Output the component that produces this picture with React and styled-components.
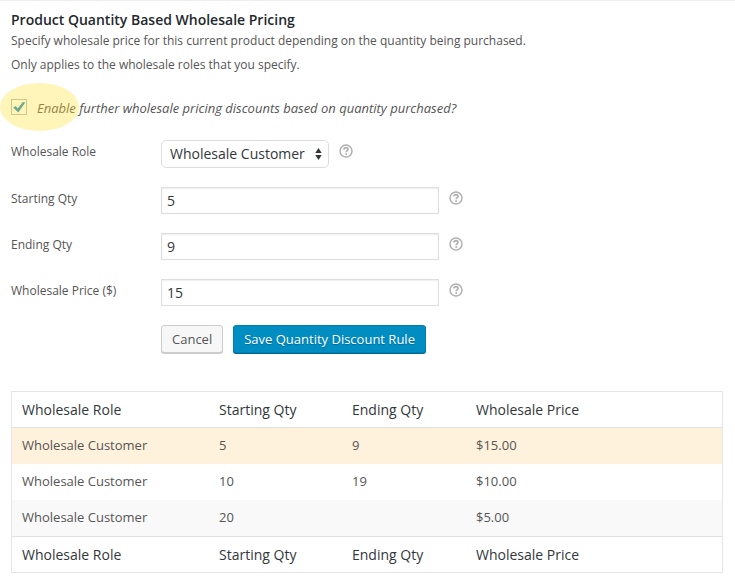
import { useState } from 'react'
import styled, { createGlobalStyle } from 'styled-components'

const GlobalStyle = createGlobalStyle`
    *, *::before, *::after {
        box-sizing: border-box;
    }
    body {
        margin: 0;
        background: #fff;
        color: #555;
        font-family: 'Open Sans', sans-serif;
        font-size: 12px;
    }
    input, select, button {
        font-family: inherit;
    }
`
const Container = styled.main`
    border-top: 1px solid #eee;
    padding: 10px 12px 10px 11px;
`
const Title = styled.h1`
    margin: 0;
    color: #23282d;
    font-size: 14px;
    font-weight: 600;
    line-height: 18px;
`
const Description = styled.p`
    margin: 0;
    line-height: 24px;
`
const EnableRow = styled.div`
    position: relative;
    display: flex;
    align-items: center;
    gap: 10px;
    height: 20px;
    margin-top: 20px;
`
const Highlight = styled.span`
    position: absolute;
    left: -11px;
    top: -14px;
    width: 79px;
    height: 48px;
    border-radius: 50%;
    background: rgba(255, 225, 52, .35);
    pointer-events: none;
`
const Checkbox = styled.input`
    appearance: none;
    width: 16px;
    height: 16px;
    margin: 0;
    border: 1px solid #b4b9be;
    background: #fff;
    &:checked {
        background: #fff url("data:image/svg+xml,%3Csvg xmlns='http://www.w3.org/2000/svg' viewBox='0 0 14 14'%3E%3Cpath d='M1.2 7.4 3.7 6 5.8 8.6 10.8 2 13.2 2.6 6.3 12.4z' fill='%231e8cbe'/%3E%3C/svg%3E");
    }
`
const EnableLabel = styled.label`
    font-size: 13px;
    font-style: italic;
    line-height: 20px;
    padding-top: 2px;
`
const Form = styled.form`
    display: flex;
    flex-direction: column;
    gap: 19px;
    margin-top: 23px;
`
const Field = styled.div`
    display: flex;
    align-items: flex-start;
`
const FieldLabel = styled.label`
    flex: 0 0 150px;
    line-height: 24px;
`
const TextInput = styled.input`
    flex: 0 1 278px;
    min-width: 0;
    height: 27px;
    padding: 0 5px;
    border: 1px solid #ddd;
    border-radius: 0;
    background: #fff;
    box-shadow: inset 0 1px 2px rgba(0, 0, 0, .07);
    color: #32373c;
    font-size: 14px;
`
const SelectBox = styled.div`
    position: relative;
    display: flex;
`
const Select = styled.select`
    appearance: none;
    height: 28px;
    padding: 0 23px 2px 8px;
    border: 1px solid #ddd;
    border-radius: 5px;
    background: #fff;
    color: #32373c;
    font-size: 14px;
`
const Arrows = styled.svg`
    position: absolute;
    right: 7px;
    top: 8px;
    pointer-events: none;
`
const HelpIcon = styled.svg`
    flex: none;
    margin: 4px 0 0 10px;
`
const Actions = styled.div`
    display: flex;
    gap: 10px;
    padding-left: 150px;
`
const Button = styled.button`
    height: 28px;
    padding: 0 10px;
    border: 1px solid ${props => props.$primary ? '#007db1' : '#ccc'};
    border-radius: 3px;
    background: ${props => props.$primary ? '#008ec2' : '#f7f7f7'};
    box-shadow: 0 1px 0 ${props => props.$primary ? '#006799' : '#ccc'};
    color: ${props => props.$primary ? '#fff' : '#555'};
    font-size: 13px;
    font-weight: ${props => props.$primary ? 500 : 400};
    text-shadow: ${props => props.$primary ? '0 1px 1px #006799' : 'none'};
    cursor: pointer;
`
const RulesTable = styled.table`
    width: 100%;
    margin-top: 38px;
    border: 1px solid #e5e5e5;
    border-spacing: 0;
    table-layout: fixed;
`
const Column = styled.col`
    width: ${props => props.$width};
`
const HeadCell = styled.th`
    height: 36px;
    padding: 0 10px;
    border-top: ${props => props.$foot ? '1px solid #e1e1e1' : 'none'};
    border-bottom: ${props => props.$foot ? 'none' : '1px solid #e1e1e1'};
    color: #32373c;
    font-size: 14px;
    font-weight: 400;
    text-align: left;
`
const Rule = styled.tr`
    background: ${props => props.$active ? '#fff2dd' : '#fff'};
    &:nth-child(3) {
        background: #f9f9f9;
    }
`
const Cell = styled.td`
    height: 36px;
    padding: 0 10px 2px;
    font-size: 13px;
`

const columns = ['Wholesale Role', 'Starting Qty', 'Ending Qty', 'Wholesale Price']
const widths = ['197px', '133px', '124px', 'auto']
const rules = [
    { role: 'Wholesale Customer', start: '5', end: '9', price: '$15.00' },
    { role: 'Wholesale Customer', start: '10', end: '19', price: '$10.00' },
    { role: 'Wholesale Customer', start: '20', end: '', price: '$5.00' },
]
const fields = [
    { id: 'start', label: 'Starting Qty' },
    { id: 'end', label: 'Ending Qty' },
    { id: 'price', label: 'Wholesale Price ($)' },
]

const Help = () => (
    <HelpIcon width="14" height="14" viewBox="0 0 14 14" fill="none" stroke="#b0b0b0" aria-hidden="true">
        <circle cx="7" cy="7" r="6" strokeWidth="1.5" />
        <path d="M5 5.6C5 4.3 5.8 3.7 7 3.7s2 .7 2 1.7C9 6.7 7.2 6.7 7.2 8.3" strokeWidth="1.7" />
        <path d="M7.2 9.2v1.7" strokeWidth="1.7" />
    </HelpIcon>
)

const App = () => {
    const [enabled, setEnabled] = useState(true)
    const [values, setValues] = useState({ start: '5', end: '9', price: '15' })

    return (
        <>
            <GlobalStyle />
            <Container>
                <Title>Product Quantity Based Wholesale Pricing</Title>
                <Description>Specify wholesale price for this current product depending on the quantity being purchased.</Description>
                <Description>Only applies to the wholesale roles that you specify.</Description>
                <EnableRow>
                    <Checkbox type="checkbox" id="enable" checked={enabled} onChange={e => setEnabled(e.target.checked)} />
                    <EnableLabel htmlFor="enable">Enable further wholesale pricing discounts based on quantity purchased?</EnableLabel>
                    <Highlight />
                </EnableRow>
                <Form onSubmit={e => e.preventDefault()}>
                    <Field>
                        <FieldLabel htmlFor="role">Wholesale Role</FieldLabel>
                        <SelectBox>
                            <Select id="role">
                                <option>Wholesale Customer</option>
                            </Select>
                            <Arrows width="7" height="12" viewBox="0 0 7 12" fill="#32373c" aria-hidden="true">
                                <path d="M3.5 0 6.7 5H.3zM3.5 12 .3 7h6.4z" />
                            </Arrows>
                        </SelectBox>
                        <Help />
                    </Field>
                    {fields.map(({ id, label }) => (
                        <Field key={id}>
                            <FieldLabel htmlFor={id}>{label}</FieldLabel>
                            <TextInput
                                type="text"
                                id={id}
                                value={values[id]}
                                onChange={e => setValues({ ...values, [id]: e.target.value })}
                            />
                            <Help />
                        </Field>
                    ))}
                    <Actions>
                        <Button type="button">Cancel</Button>
                        <Button type="submit" $primary>Save Quantity Discount Rule</Button>
                    </Actions>
                </Form>
                <RulesTable>
                    <colgroup>
                        {widths.map(width => <Column key={width} $width={width} />)}
                    </colgroup>
                    <thead>
                        <tr>{columns.map(name => <HeadCell key={name} scope="col">{name}</HeadCell>)}</tr>
                    </thead>
                    <tbody>
                        {rules.map(rule => (
                            <Rule key={rule.start} $active={rule.start === values.start}>
                                <Cell>{rule.role}</Cell>
                                <Cell>{rule.start}</Cell>
                                <Cell>{rule.end}</Cell>
                                <Cell>{rule.price}</Cell>
                            </Rule>
                        ))}
                    </tbody>
                    <tfoot>
                        <tr>{columns.map(name => <HeadCell key={name} scope="col" $foot>{name}</HeadCell>)}</tr>
                    </tfoot>
                </RulesTable>
            </Container>
        </>
    )
}

export default App
